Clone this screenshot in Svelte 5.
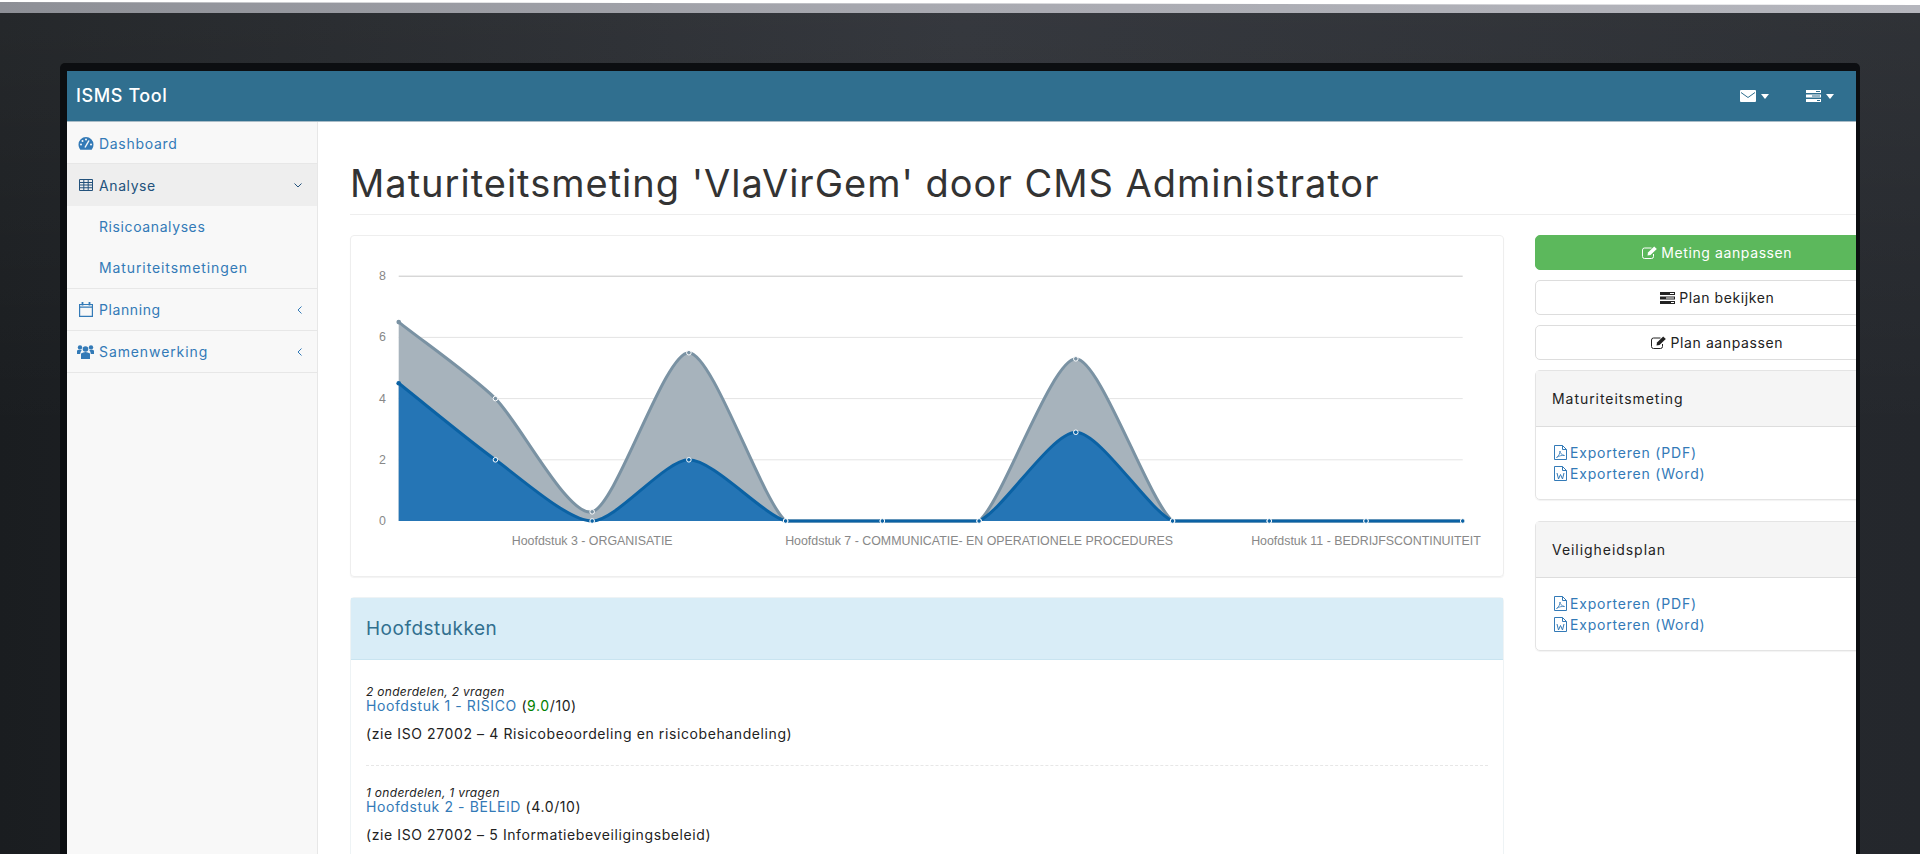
<script lang="ts">
  const labels = [
    { i: 2, text: 'Hoofdstuk 3 - ORGANISATIE' },
    { i: 6, text: 'Hoofdstuk 7 - COMMUNICATIE- EN OPERATIONELE PROCEDURES' },
    { i: 10, text: 'Hoofdstuk 11 - BEDRIJFSCONTINUITEIT' }
  ];
  const lower = [4.5, 2, 0, 2, 0, 0, 0, 2.9, 0, 0, 0, 0];
  const upper = [6.5, 4, 0.3, 5.5, 0, 0, 0, 5.3, 0, 0, 0, 0];

  const left = 398.7;
  const step = 96.73;
  const base = 521;
  const unit = 30.6;
  const right = left + step * 11;

  const px = (i: number) => left + step * i;
  const py = (v: number) => base - v * unit;

  // same curve as morris.js: hermite with the gradient of the neighbours
  function curve(values: number[]) {
    const pts = values.map((v, i) => ({ x: px(i), y: py(v) }));
    const grads = pts.map((p, i) => {
      const a = pts[Math.max(i - 1, 0)];
      const b = pts[Math.min(i + 1, pts.length - 1)];
      return (b.y - a.y) / (b.x - a.x);
    });
    let d = `M${pts[0].x},${pts[0].y}`;
    for (let i = 0; i < pts.length - 1; i++) {
      const p = pts[i];
      const n = pts[i + 1];
      const ix = (n.x - p.x) / 4;
      const y1 = Math.min(base, p.y + ix * grads[i]);
      const y2 = Math.min(base, n.y - ix * grads[i + 1]);
      d += `C${p.x + ix},${y1},${n.x - ix},${y2},${n.x},${n.y}`;
    }
    return d;
  }

  const series = [
    { values: upper, line: curve(upper), fill: '#a7b3bc', stroke: '#7a92a3' },
    { values: lower, line: curve(lower), fill: '#2575b5', stroke: '#0b62a4' }
  ];
  const closing = `L${right},${base}L${left},${base}Z`;
  const ticks = [8, 6, 4, 2];

  const exports_ = [
    { title: 'Maturiteitsmeting' },
    { title: 'Veiligheidsplan' }
  ];
  const chapters = [
    { meta: '2 onderdelen, 2 vragen', name: 'Hoofdstuk 1 - RISICO', score: '9.0', good: true, iso: '(zie ISO 27002 – 4 Risicobeoordeling en risicobehandeling)' },
    { meta: '1 onderdelen, 1 vragen', name: 'Hoofdstuk 2 - BELEID', score: '4.0', good: false, iso: '(zie ISO 27002 – 5 Informatiebeveiligingsbeleid)' }
  ];
</script>

{#snippet tasks(w, h)}
  <svg class="ico" width={w} height={h} viewBox="0 0 15 12" fill="currentColor">
    <path fill-rule="evenodd" d="M0 0h15v3H0zM10 1v1h4V1zM0 4.500h15v3H0zM6 5.500v1h8v-1zM0 9h15v3H0zM11 10v1h3v-1z" />
  </svg>
{/snippet}

{#snippet edit()}
  <svg class="ico" width="15" height="13" viewBox="0 0 15 13" fill="none" stroke="currentColor">
    <path d="M9.500 2H2.500a2 2 0 0 0-2 2v6.500a2 2 0 0 0 2 2h7a2 2 0 0 0 2-2V8" />
    <path d="M5.500 9.500l.5-3L12.200.4l2.600 2.600L8.500 9z" fill="currentColor" stroke="none" />
  </svg>
{/snippet}

{#snippet fileIcon(kind)}
  <svg class="ico file" width="13" height="15" viewBox="0 0 13 15" fill="none" stroke="currentColor">
    <path d="M.5.5h8l4 4v10H.5zM8.500.5v4h4" />
    {#if kind === 'pdf'}
      <path d="M2.500 12.500c2-1 3.500-4 3.500-6.500 0 2 1.500 4 4.500 4.500-2.500-.5-6 .5-8 2z" stroke-width=".8" />
    {:else}
      <path d="M3 7l1.500 6L6.500 8.500 8.500 13 10 7" stroke-width="1" />
    {/if}
  </svg>
{/snippet}

<div class="monitor">
  <div class="trim"></div>
  <div class="housing">
    <div class="bezel">
      <div class="app">
        <nav class="topbar">
          <span class="brand">ISMS Tool</span>
          <div class="tools">
            <span class="tool">
              <svg class="ico" width="16" height="12" viewBox="0 0 16 12">
                <rect width="16" height="12" rx="1" fill="#fff" />
                <path d="M1 2.500l7 5 7-5" fill="none" stroke="#306f8f" />
              </svg>
              <i class="caret"></i>
            </span>
            <span class="tool">
              {@render tasks(15, 12)}
              <i class="caret"></i>
            </span>
          </div>
        </nav>

        <div class="columns">
          <aside class="sidebar">
            <a class="item first">
              <svg class="ico side" width="16" height="13" viewBox="0 0 15 13">
                <path d="M7.500 0A7.500 7.500 0 0 0 0 7.500c0 2 .7 3.800 1.800 5.200h11.400A7.500 7.500 0 0 0 15 7.500 7.500 7.500 0 0 0 7.500 0z" fill="currentColor" />
                <circle cx="2.500" cy="7.500" r="1" fill="#f8f8f8" />
                <circle cx="4" cy="4" r="1" fill="#f8f8f8" />
                <circle cx="7.500" cy="2.500" r="1" fill="#f8f8f8" />
                <circle cx="12.500" cy="7.500" r="1" fill="#f8f8f8" />
                <path d="M6.500 10.500L10.500 3.500" stroke="#f8f8f8" stroke-width="1.500" />
              </svg>
              Dashboard
            </a>
            <a class="item open">
              <svg class="ico side" width="14" height="12" viewBox="0 0 14 12" fill="none" stroke="currentColor">
                <path d="M.5.5h13v11H.5zM.5 3.500h13M.5 6h13M.5 8.750h13M4.800 .5v11M9.200 .5v11" />
              </svg>
              Analyse
              <svg class="chev" width="8" height="5" viewBox="0 0 8 5" fill="none" stroke="currentColor"><path d="M.5.5L4 4 7.500.5" /></svg>
            </a>
            <div class="sub">
              <a class="subitem">Risicoanalyses</a>
              <a class="subitem long">Maturiteitsmetingen</a>
            </div>
            <a class="item">
              <svg class="ico side" width="14" height="15" viewBox="0 0 14 15" fill="none" stroke="currentColor">
                <path d="M.6 2.500h12.800v11.900H.6zM.6 5.200h12.800" stroke-width="1.200" />
                <path d="M3.500 0v3.500M10.500 0v3.500" stroke-width="1.800" />
              </svg>
              Planning
              <svg class="chev" width="5" height="8" viewBox="0 0 5 8" fill="none" stroke="currentColor"><path d="M4.500.5L1 4l3.500 3.500" /></svg>
            </a>
            <a class="item long">
              <svg class="ico side wide" width="17" height="14" viewBox="0 0 17 14" fill="currentColor">
                <circle cx="8.500" cy="4" r="2.800" />
                <circle cx="3" cy="2.400" r="2.200" />
                <circle cx="14" cy="2.400" r="2.200" />
                <path d="M4 8.500Q8.500 5.500 13 8.500V14H4zM0 5.500Q1.800 4.300 4.800 5.200 3.300 6.500 3.200 9H0zM17 5.500Q15.200 4.300 12.200 5.200 13.700 6.500 13.800 9H17z" />
              </svg>
              Samenwerking
              <svg class="chev" width="5" height="8" viewBox="0 0 5 8" fill="none" stroke="currentColor"><path d="M4.500.5L1 4l3.500 3.500" /></svg>
            </a>
          </aside>

          <main class="page">
            <h1 class="title">Maturiteitsmeting 'VlaVirGem' door CMS Administrator</h1>

            <div class="grid">
              <div class="left">
                <section class="chart">
                  <svg width="1152" height="340" viewBox="351 236 1152 340">
                    {#each ticks as t, n}
                      <line x1={left} x2={right} y1={py(t)} y2={py(t)} stroke={n === 0 ? '#c6c6c6' : '#e4e4e4'} />
                    {/each}
                    {#each [8, 6, 4, 2, 0] as t}
                      <text class="axis" x="386" y={py(t) + 4} text-anchor="end">{t}</text>
                    {/each}
                    {#each labels as l}
                      <text class="axis" x={px(l.i)} y="545" text-anchor="middle">{l.text}</text>
                    {/each}
                    {#each series as s}
                      <path d={s.line + closing} fill={s.fill} />
                      <path d={s.line} fill="none" stroke={s.stroke} stroke-width="3" />
                    {/each}
                    {#each series as s}
                      {#each s.values as v, i}
                        <circle cx={px(i)} cy={py(v)} r="2.300" fill={s.stroke} stroke="#fff" stroke-width={i === 0 ? 0 : 1} />
                      {/each}
                    {/each}
                  </svg>
                </section>

                <section class="chapters">
                  <h2 class="chapters-head">Hoofdstukken</h2>
                  <div class="chapters-body">
                    {#each chapters as c, i}
                      <article class="chapter" class:ruled={i === 0}>
                        <em class="meta">{c.meta}</em>
                        <div class="name"><a>{c.name}</a> (<span class:good={c.good}>{c.score}</span>/10)</div>
                        <p class="iso">{c.iso}</p>
                      </article>
                    {/each}
                  </div>
                </section>
              </div>

              <div class="right">
                <button class="btn green">{@render edit()} Meting aanpassen</button>
                <button class="btn">{@render tasks(15, 12)} Plan bekijken</button>
                <button class="btn">{@render edit()} Plan aanpassen</button>
                {#each exports_ as e}
                  <section class="panel">
                    <h3 class="panel-head">{e.title}</h3>
                    <div class="panel-body">
                      <a class="dl">{@render fileIcon('pdf')}Exporteren (PDF)</a>
                      <a class="dl">{@render fileIcon('word')}Exporteren (Word)</a>
                    </div>
                  </section>
                {/each}
              </div>
            </div>
          </main>
        </div>
      </div>
    </div>
  </div>
</div>

<style>
  :global(body) {
    margin: 0;
    background: #fff;
    overflow: hidden;
  }

  .monitor {
    height: 854px;
    padding-top: 2px;
    box-sizing: border-box;
    display: flex;
    flex-direction: column;
    font-family: Inter, "Open Sans", sans-serif;
    font-size: 14px;
    letter-spacing: 0.6px;
    color: #333;
    clip-path: polygon(0 2px, 100% 5px, 100% 100%, 0 100%);
  }

  .trim {
    height: 11px;
    flex: none;
    background: linear-gradient(90deg, #8d8f96, #a9aab1 50%, #b5b6bd);
  }

  .housing {
    flex: 1;
    min-height: 0;
    padding: 50px 60px 0 60px;
    background:
      linear-gradient(180deg, rgba(255, 255, 255, 0.05), transparent 420px),
      linear-gradient(90deg, #1a1d20 0%, #2b2e34 50%, #24272c 100%);
    display: flex;
  }

  .bezel {
    flex: 1;
    min-width: 0;
    padding: 8px 4px 0 7px;
    background: #0c0e11;
    border-radius: 5px 5px 0 0;
    display: flex;
  }

  .app {
    flex: 1;
    min-width: 0;
    background: #fff;
    overflow: hidden;
    display: flex;
    flex-direction: column;
  }

  .topbar {
    height: 51px;
    flex: none;
    box-sizing: border-box;
    padding: 0 22px 0 9px;
    display: flex;
    align-items: center;
    justify-content: space-between;
    background: #306f8f;
    border-bottom: 1px solid #a9bcc7;
    color: #fff;
  }

  .brand {
    font-size: 18px;
    font-weight: 500;
    margin-top: -1px;
  }

  .tools {
    display: flex;
    gap: 37px;
  }

  .tool {
    display: flex;
    align-items: center;
    gap: 5px;
  }

  .caret {
    border-top: 5px solid #fff;
    border-left: 4px solid transparent;
    border-right: 4px solid transparent;
  }

  .ico {
    flex: none;
    vertical-align: -1px;
  }

  .columns {
    flex: 1;
    min-height: 0;
    display: flex;
  }

  .sidebar {
    width: 251px;
    flex: none;
    box-sizing: border-box;
    background: #f8f8f8;
    border-right: 1px solid #e7e7e7;
    color: #337ab7;
  }

  .item {
    height: 42px;
    box-sizing: border-box;
    padding: 0 15px 0 11px;
    display: flex;
    align-items: center;
    gap: 5px;
    border-bottom: 1px solid #e7e7e7;
  }

  .item.first {
    padding-top: 2px;
    letter-spacing: 0.7px;
  }

  .item.long,
  .subitem.long {
    letter-spacing: 0.9px;
  }

  .item.open {
    background: #eee;
    color: #23527c;
    border-bottom: 0;
  }

  .side {
    width: 16px;
  }

  .side.wide {
    width: 17px;
    margin: 0 -1px 0 -1px;
    padding-right: 1px;
  }

  .chev {
    margin-left: auto;
  }

  .sub {
    border-bottom: 1px solid #e7e7e7;
  }

  .subitem {
    height: 41px;
    padding-left: 32px;
    display: flex;
    align-items: center;
  }

  .page {
    flex: 1;
    min-width: 0;
    padding-left: 32px;
  }

  .title {
    margin: 0;
    height: 93px;
    box-sizing: border-box;
    padding-top: 39px;
    font-size: 38px;
    font-weight: 400;
    line-height: 44px;
    letter-spacing: 1px;
    color: #333;
    border-bottom: 1px solid #eee;
    white-space: nowrap;
  }

  .grid {
    margin-top: 20px;
    display: grid;
    grid-template-columns: 1154px 364px;
    gap: 31px;
  }

  .chart {
    height: 342px;
    box-sizing: border-box;
    border: 1px solid #eee;
    border-radius: 4px;
    box-shadow: 0 1px 1px rgba(0, 0, 0, 0.05);
  }

  .chart svg {
    display: block;
  }

  .axis {
    font-family: "Liberation Sans", Arial, sans-serif;
    font-size: 12.4px;
    letter-spacing: 0;
    fill: #888;
  }

  .chapters {
    margin-top: 20px;
    border: 1px solid #eef3f5;
    border-radius: 4px 4px 0 0;
  }

  .chapters-head {
    margin: 0;
    height: 61px;
    padding: 0 15px;
    display: flex;
    align-items: center;
    font-size: 19px;
    font-weight: 400;
    letter-spacing: 0.5px;
    color: #31708f;
    background: #d9edf7;
    border-bottom: 1px solid #c9e4f0;
  }

  .chapters-body {
    padding: 25px 15px 0;
  }

  .chapter {
    padding-bottom: 21px;
  }

  .chapter.ruled {
    border-bottom: 1px dashed #e7e7e7;
    margin-bottom: 20px;
  }

  .meta {
    display: block;
    font-size: 12px;
    line-height: 13px;
    letter-spacing: 0.3px;
    color: #222;
  }

  .name {
    line-height: 16px;
    color: #222;
  }

  .name a,
  .dl {
    color: #337ab7;
  }

  .good {
    color: #008000;
  }

  .iso {
    margin: 10px 0 0;
    line-height: 20px;
    color: #222;
  }

  .right {
    display: flex;
    flex-direction: column;
    align-items: stretch;
  }

  .btn {
    height: 35px;
    margin-bottom: 10px;
    font: inherit;
    letter-spacing: inherit;
    color: #222;
    background: #fff;
    border: 1px solid #ddd;
    border-radius: 5px;
  }

  .btn.green {
    color: #fff;
    background: #5cb85c;
    border-color: #5cb85c;
  }

  .panel {
    margin-bottom: 21px;
    border: 1px solid #e4e4e4;
    border-radius: 5px;
    box-shadow: 0 1px 1px rgba(0, 0, 0, 0.05);
  }

  .panel-head {
    margin: 0;
    height: 55px;
    padding: 0 16px;
    display: flex;
    align-items: center;
    font-size: 14px;
    font-weight: 400;
    letter-spacing: 0.95px;
    color: #222;
    background: #f5f5f5;
    border-bottom: 1px solid #ddd;
  }

  .panel-body {
    padding: 15px 18px 15px;
  }

  .dl {
    height: 21px;
    display: flex;
    align-items: center;
    gap: 3px;
    letter-spacing: 0.8px;
  }
</style>
